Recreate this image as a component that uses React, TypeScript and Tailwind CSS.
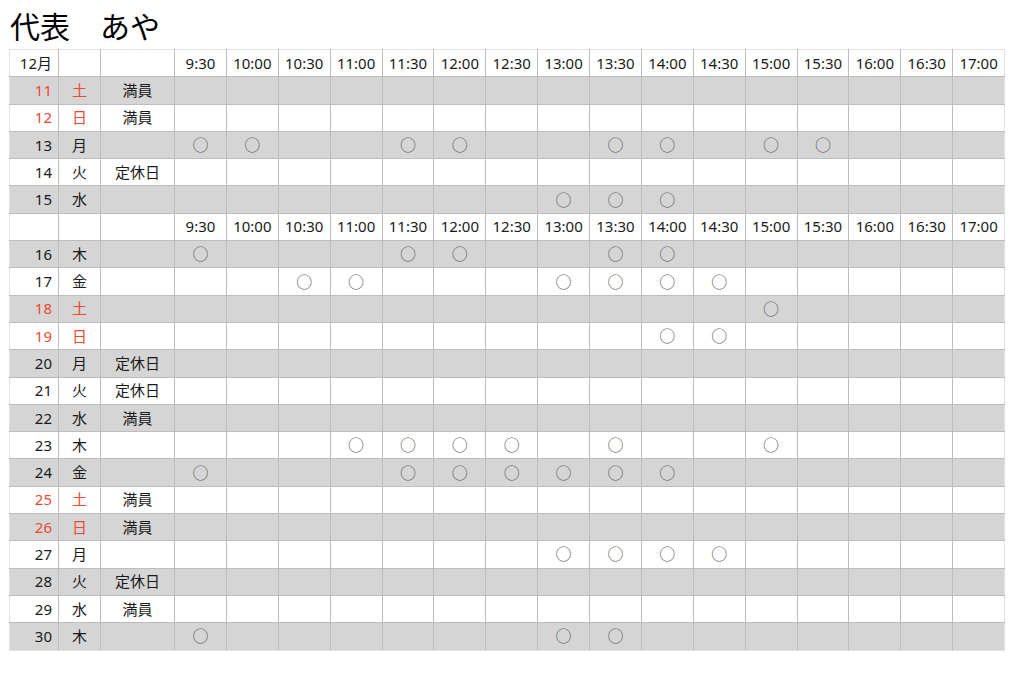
const TIMES = ["9:30", "10:00", "10:30", "11:00", "11:30", "12:00", "12:30", "13:00", "13:30", "14:00", "14:30", "15:00", "15:30", "16:00", "16:30", "17:00"]

type Day = {
    date: number
    dow: string
    note?: string
    slots?: number[]
    red?: boolean
}

const firstWeek: Day[] = [
    { date: 11, dow: "土", note: "満員", red: true },
    { date: 12, dow: "日", note: "満員", red: true },
    { date: 13, dow: "月", slots: [0, 1, 4, 5, 8, 9, 11, 12] },
    { date: 14, dow: "火", note: "定休日" },
    { date: 15, dow: "水", slots: [7, 8, 9] },
]

const rest: Day[] = [
    { date: 16, dow: "木", slots: [0, 4, 5, 8, 9] },
    { date: 17, dow: "金", slots: [2, 3, 7, 8, 9, 10] },
    { date: 18, dow: "土", slots: [11], red: true },
    { date: 19, dow: "日", slots: [9, 10], red: true },
    { date: 20, dow: "月", note: "定休日" },
    { date: 21, dow: "火", note: "定休日" },
    { date: 22, dow: "水", note: "満員" },
    { date: 23, dow: "木", slots: [3, 4, 5, 6, 8, 11] },
    { date: 24, dow: "金", slots: [0, 4, 5, 6, 7, 8, 9] },
    { date: 25, dow: "土", note: "満員", red: true },
    { date: 26, dow: "日", note: "満員", red: true },
    { date: 27, dow: "月", slots: [7, 8, 9, 10] },
    { date: 28, dow: "火", note: "定休日" },
    { date: 29, dow: "水", note: "満員" },
    { date: 30, dow: "木", slots: [0, 7, 8] },
]

const cell = "h-[27.3px] border border-[#bdbdbd] p-0 group-first/row:border-t-[#e2e2e2] group-last/row:border-b-[#e2e2e2]"

const HeaderRow = ({ label }: { label: string }) => (
    <tr className="group/row bg-white">
        <td className={`${cell} border-l-[#e2e2e2] text-right pr-[6px]`}>{label}</td>
        <td className={cell}></td>
        <td className={cell}></td>
        {TIMES.map((t, i) => (
            <td key={t} className={`${cell} text-center ${i === TIMES.length - 1 ? "border-r-[#e2e2e2]" : ""}`}>
                {t}
            </td>
        ))}
    </tr>
)

const DayRow = ({ day, gray }: { day: Day; gray: boolean }) => (
    <tr className={`group/row ${gray ? "bg-[#d5d5d5]" : "bg-white"}`}>
        <td className={`${cell} border-l-[#e2e2e2] text-right pr-[6px] ${day.red ? "text-[#ea4a32]" : ""}`}>{day.date}</td>
        <td className={`${cell} text-center ${day.red ? "text-[#ea4a32]" : ""}`}>{day.dow}</td>
        <td className={`${cell} text-center`}>{day.note}</td>
        {TIMES.map((t, i) => (
            <td key={t} className={`${cell} text-center text-[16px] text-[#5a5a5a] ${i === TIMES.length - 1 ? "border-r-[#e2e2e2]" : ""}`}>
                {day.slots?.includes(i) ? "○" : ""}
            </td>
        ))}
    </tr>
)

export default function App() {
    return (
        <div className="w-[1024px] h-[674px] bg-white px-[9px] pt-[8px] font-['Noto_Sans','Noto_Sans_CJK_JP',sans-serif] text-[#1a1a1a]">
            <h1 className="text-[30px] leading-[34px] h-[41px] pl-[1px] text-black font-['Noto_Sans_CJK_JP',sans-serif]">代表　あや</h1>
            <table className="w-[996px] table-fixed border-collapse text-[15px] leading-none">
                <colgroup>
                    <col className="w-[49px]" />
                    <col className="w-[42px]" />
                    <col className="w-[74px]" />
                    {TIMES.map((t) => (
                        <col key={t} />
                    ))}
                </colgroup>
                <tbody>
                    <HeaderRow label="12月" />
                    {firstWeek.map((d, i) => (
                        <DayRow key={d.date} day={d} gray={i % 2 === 0} />
                    ))}
                    <HeaderRow label="" />
                    {rest.map((d, i) => (
                        <DayRow key={d.date} day={d} gray={i % 2 === 0} />
                    ))}
                </tbody>
            </table>
        </div>
    )
}
